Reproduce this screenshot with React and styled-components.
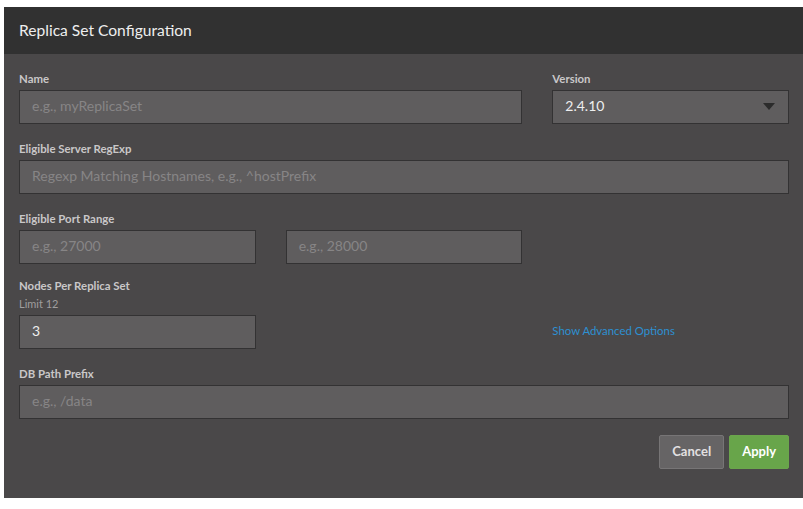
import React from "react";
import styled, { createGlobalStyle } from "styled-components";

const Global = createGlobalStyle`
  html, body { margin: 0; padding: 0; background: #ffffff; }
  body { font-family: Lato, "Open Sans", sans-serif; }
  * { box-sizing: border-box; }
`;

const Panel = styled.div`
  margin: 7px 0 0 4px;
  width: 799px;
  height: 491px;
  background: #4a4849;
  display: flex;
  flex-direction: column;
`;

const Header = styled.div`
  height: 47px;
  background: #313131;
  display: flex;
  align-items: center;
  padding: 0 0 2px 15px;
  color: #eeeeee;
  font-size: 15.6px;
`;

const Body = styled.div`
  padding: 18px 14px 0 15px;
  display: flex;
  flex-direction: column;
`;

const Row = styled.div`
  display: grid;
  grid-template-columns: repeat(3, 1fr);
  column-gap: 30px;
  margin-top: ${(p) => p.$mt || 0}px;
  align-items: end;
`;

const Field = styled.div`
  grid-column: span ${(p) => p.$span || 1};
  display: flex;
  flex-direction: column;
`;

const Label = styled.div`
  font-size: 11.4px;
  line-height: 14px;
  font-weight: 700;
  color: #c9c7c8;
  margin-bottom: ${(p) => (p.$tight ? 0 : 4)}px;
`;

const Hint = styled.div`
  font-size: 11px;
  line-height: 14px;
  color: #a09e9f;
  margin: 4px 0 4px;
`;

const Input = styled.div`
  height: 34px;
  background: #5f5d5e;
  border: 1px solid #333233;
  padding: 0 12px 3px;
  display: flex;
  align-items: center;
  justify-content: space-between;
  font-size: 14px;
  color: ${(p) => (p.$filled ? "#eeeeee" : "#878586")};
`;

const Caret = styled.span`
  width: 0;
  height: 0;
  border-left: 6px solid transparent;
  border-right: 6px solid transparent;
  border-top: 7px solid #2b2b2b;
  margin: 2px 1px 0 0;
`;

const Link = styled.a`
  height: 34px;
  padding-bottom: 3px;
  display: flex;
  align-items: center;
  font-size: 11.4px;
  color: #2d90d2;
  text-decoration: none;
  cursor: pointer;
`;

const Footer = styled.div`
  display: flex;
  justify-content: flex-end;
  gap: 5px;
  margin-top: 16px;
`;

const Button = styled.button`
  height: 34px;
  padding: 0 12px 2px;
  border-radius: 2px;
  border: 1px solid ${(p) => (p.$primary ? "#6ba54c" : "#777576")};
  background: ${(p) => (p.$primary ? "#68a54a" : "#666465")};
  color: ${(p) => (p.$primary ? "#ffffff" : "#e2e0e1")};
  font-family: Lato, "Open Sans", sans-serif;
  font-size: 13px;
  font-weight: 700;
  cursor: pointer;
`;

export default function App() {
  return (
    <>
      <Global />
      <Panel>
        <Header>Replica Set Configuration</Header>
        <Body>
          <Row>
            <Field $span={2}>
              <Label>Name</Label>
              <Input>e.g., myReplicaSet</Input>
            </Field>
            <Field>
              <Label>Version</Label>
              <Input $filled>
                2.4.10
                <Caret />
              </Input>
            </Field>
          </Row>
          <Row $mt={18}>
            <Field $span={3}>
              <Label>Eligible Server RegExp</Label>
              <Input>Regexp Matching Hostnames, e.g., ^hostPrefix</Input>
            </Field>
          </Row>
          <Row $mt={18}>
            <Field $span={3}>
              <Label>Eligible Port Range</Label>
            </Field>
          </Row>
          <Row>
            <Field>
              <Input>e.g., 27000</Input>
            </Field>
            <Field>
              <Input>e.g., 28000</Input>
            </Field>
          </Row>
          <Row $mt={15}>
            <Field>
              <Label $tight>Nodes Per Replica Set</Label>
              <Hint>Limit 12</Hint>
              <Input $filled>3</Input>
            </Field>
            <div />
            <Link>Show Advanced Options</Link>
          </Row>
          <Row $mt={18}>
            <Field $span={3}>
              <Label>DB Path Prefix</Label>
              <Input>e.g., /data</Input>
            </Field>
          </Row>
          <Footer>
            <Button>Cancel</Button>
            <Button $primary>Apply</Button>
          </Footer>
        </Body>
      </Panel>
    </>
  );
}
